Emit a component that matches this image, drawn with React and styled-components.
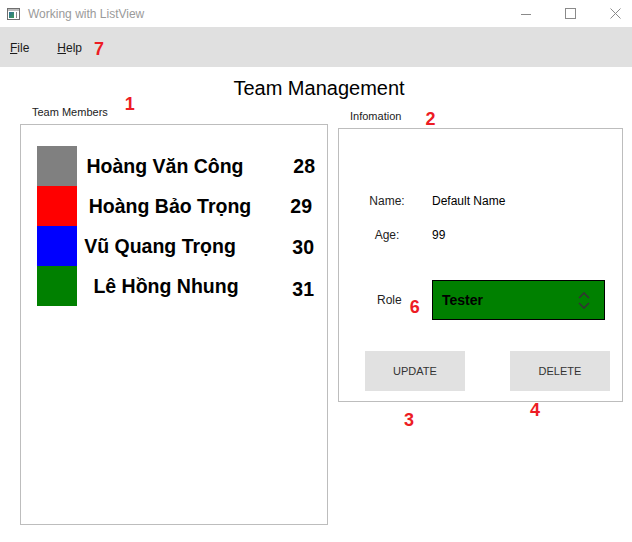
import React from "react";
import styled, { createGlobalStyle } from "styled-components";

const GlobalStyle = createGlobalStyle`
  html, body { margin: 0; padding: 0; background: #fff; }
  body { font-family: "Liberation Sans", Arial, sans-serif; color: #000; }
  * { box-sizing: border-box; }
`;

const members = [
  { name: "Hoàng Văn Công", age: 28, color: "#808080", nudge: 0, ageShift: 0, ageDrop: 0 },
  { name: "Hoàng Bảo Trọng", age: 29, color: "#ff0000", nudge: 5, ageShift: 3, ageDrop: 0 },
  { name: "Vũ Quang Trọng", age: 30, color: "#0000ff", nudge: -5, ageShift: 1, ageDrop: 1 },
  { name: "Lê Hồng Nhung", age: 31, color: "#008000", nudge: 1, ageShift: 1, ageDrop: 3 },
];

const Window = styled.div`
  width: 632px;
  height: 542px;
  display: flex;
  flex-direction: column;
  overflow: hidden;
  background: #fff;
`;

const TitleBar = styled.div`
  height: 27px;
  display: flex;
  align-items: center;
  padding-left: 7px;
  overflow: hidden;
`;

const TitleText = styled.span`
  margin-left: 8px;
  font-size: 12px;
  color: #9a9a9a;
`;

const Controls = styled.div`
  margin-left: auto;
  margin-right: -6px;
  display: flex;
`;

const ControlButton = styled.div`
  width: 45px;
  height: 27px;
  display: flex;
  align-items: center;
  justify-content: center;
`;

const MenuBar = styled.div`
  height: 40px;
  background: #e0e0e0;
  display: flex;
  align-items: center;
  padding: 2px 0 0 10px;
`;

const MenuItem = styled.span`
  font-size: 12px;
  line-height: 16px;
  color: #1a1a1a;
  margin-right: ${(p) => p.$gap || 0}px;
`;

const Accel = styled.span`
  text-decoration: underline;
`;

const Mark = styled.span`
  font-size: 18px;
  line-height: 18px;
  font-weight: bold;
  color: #ed1c24;
  margin-left: ${(p) => p.$dx || 0}px;
  margin-top: ${(p) => p.$dy || 0}px;
`;

const Main = styled.div`
  flex: 1;
  display: flex;
  flex-direction: column;
  padding-top: 9px;
`;

const Heading = styled.h1`
  margin: 0;
  padding-left: 6px;
  text-align: center;
  font-size: 20px;
  line-height: 24px;
  font-weight: normal;
  color: #000;
`;

const Columns = styled.div`
  display: flex;
  align-items: flex-start;
  gap: 10px;
  padding-left: 20px;
`;

const Column = styled.div`
  width: ${(p) => p.$w}px;
  display: flex;
  flex-direction: column;
`;

const CaptionRow = styled.div`
  height: ${(p) => p.$h}px;
  display: flex;
  align-items: flex-start;
  padding-left: 12px;
`;

const CaptionText = styled.span`
  font-size: 11px;
  line-height: 14px;
  color: #222;
  margin-top: ${(p) => p.$top}px;
`;

const Panel = styled.div`
  border: 1px solid #bdbdbd;
`;

const MembersPanel = styled(Panel)`
  height: 401px;
  padding: 21px 12px 0 16px;
`;

const MemberRow = styled.div`
  display: grid;
  grid-template-columns: 40px 176px 1fr;
  align-items: center;
  height: 40px;
`;

const Swatch = styled.div`
  width: 40px;
  height: 40px;
  background: ${(p) => p.$color};
`;

const MemberName = styled.div`
  text-align: center;
  font-size: 19.5px;
  line-height: 24px;
  font-weight: bold;
  white-space: nowrap;
  padding-left: ${(p) => Math.max(0, p.$nudge * 2)}px;
  padding-right: ${(p) => Math.max(0, -p.$nudge * 2)}px;
`;

const MemberAge = styled.div`
  text-align: right;
  font-size: 19.5px;
  line-height: 24px;
  font-weight: bold;
  padding-right: ${(p) => p.$shift}px;
  padding-top: ${(p) => p.$drop * 2}px;
`;

const InfoPanel = styled(Panel)`
  padding: 64px 11px 10px 3px;
`;

const FieldRow = styled.div`
  display: grid;
  grid-template-columns: 90px 1fr;
  align-items: center;
  margin-top: ${(p) => p.$gap || 0}px;
`;

const FieldLabel = styled.span`
  text-align: center;
  font-size: 12px;
  line-height: 16px;
  color: #222;
`;

const FieldValue = styled.span`
  font-size: 12px;
  line-height: 16px;
  color: #000;
`;

const RoleRow = styled.div`
  display: grid;
  grid-template-columns: 90px 1fr;
  height: 40px;
  margin-top: 37px;
`;

const RoleLabel = styled.div`
  display: flex;
  align-items: flex-start;
  padding-left: 35px;
`;

const RoleText = styled.span`
  font-size: 12px;
  line-height: 16px;
  color: #222;
  margin-top: 12px;
`;

const Combo = styled.div`
  width: 173px;
  height: 40px;
  background: #008000;
  border: 1px solid #000;
  display: flex;
  align-items: center;
  justify-content: space-between;
  padding: 0 14px 0 9px;
  font-size: 14px;
  font-weight: bold;
  color: #000;
`;

const ButtonRow = styled.div`
  display: flex;
  gap: 45px;
  padding-left: 23px;
  margin-top: 31px;
`;

const ActionButton = styled.button`
  flex: none;
  width: 100px;
  height: 40px;
  border: none;
  background: #e1e1e1;
  font-family: inherit;
  font-size: 11px;
  color: #333;
  padding: 0;
`;

const Notes = styled.div`
  display: flex;
  align-items: flex-start;
  gap: 116px;
  padding-left: 66px;
`;

function AppIcon() {
  return (
    <svg width="13" height="12" viewBox="0 0 13 12">
      <defs>
        <linearGradient id="ic" x1="0" y1="0" x2="1" y2="1">
          <stop offset="0" stopColor="#2f6f9a" />
          <stop offset="1" stopColor="#3b9a55" />
        </linearGradient>
      </defs>
      <rect x="0.5" y="0.5" width="12" height="11" fill="#fff" stroke="#6f6f6f" />
      <rect x="1" y="1" width="11" height="2" fill="#bdbdbd" />
      <rect x="2" y="4" width="5" height="6" fill="url(#ic)" />
      <rect x="9" y="4" width="1" height="6" fill="#8a8a8a" />
    </svg>
  );
}

function Chevrons() {
  return (
    <svg width="12" height="17" viewBox="0 0 12 17">
      <path d="M1 6 L6 1 L11 6" fill="none" stroke="#333" strokeWidth="1.6" />
      <path d="M1 11 L6 16 L11 11" fill="none" stroke="#333" strokeWidth="1.6" />
    </svg>
  );
}

export default function App() {
  return (
    <Window>
      <GlobalStyle />
      <TitleBar>
        <AppIcon />
        <TitleText>Working with ListView</TitleText>
        <Controls>
          <ControlButton>
            <svg width="10" height="10" viewBox="0 0 10 10">
              <path d="M0 5.5 H10" stroke="#8a8a8a" strokeWidth="1" />
            </svg>
          </ControlButton>
          <ControlButton>
            <svg width="11" height="11" viewBox="0 0 11 11">
              <rect x="0.5" y="0.5" width="10" height="10" fill="none" stroke="#8a8a8a" />
            </svg>
          </ControlButton>
          <ControlButton>
            <svg width="11" height="11" viewBox="0 0 11 11">
              <path d="M0.5 0.5 L10.5 10.5 M10.5 0.5 L0.5 10.5" stroke="#8a8a8a" strokeWidth="1" />
            </svg>
          </ControlButton>
        </Controls>
      </TitleBar>

      <MenuBar>
        <MenuItem $gap={28}>
          <Accel>F</Accel>ile
        </MenuItem>
        <MenuItem>
          <Accel>H</Accel>elp
        </MenuItem>
        <Mark $dx={12} $dy={2}>7</Mark>
      </MenuBar>

      <Main>
        <Heading>Team Management</Heading>
        <Columns>
          <Column $w={308}>
            <CaptionRow $h={24}>
              <CaptionText $top={5}>Team Members</CaptionText>
              <Mark $dx={17} $dy={-5}>1</Mark>
            </CaptionRow>
            <MembersPanel>
              {members.map((m) => (
                <MemberRow key={m.name}>
                  <Swatch $color={m.color} />
                  <MemberName $nudge={m.nudge}>{m.name}</MemberName>
                  <MemberAge $shift={m.ageShift} $drop={m.ageDrop}>{m.age}</MemberAge>
                </MemberRow>
              ))}
            </MembersPanel>
          </Column>

          <Column $w={285}>
            <CaptionRow $h={28}>
              <CaptionText $top={9}>Infomation</CaptionText>
              <Mark $dx={24} $dy={10}>2</Mark>
            </CaptionRow>
            <InfoPanel>
              <FieldRow>
                <FieldLabel>Name:</FieldLabel>
                <FieldValue>Default Name</FieldValue>
              </FieldRow>
              <FieldRow $gap={18}>
                <FieldLabel>Age:</FieldLabel>
                <FieldValue>99</FieldValue>
              </FieldRow>
              <RoleRow>
                <RoleLabel>
                  <RoleText>Role</RoleText>
                  <Mark $dx={8} $dy={18}>6</Mark>
                </RoleLabel>
                <Combo>
                  <span>Tester</span>
                  <Chevrons />
                </Combo>
              </RoleRow>
              <ButtonRow>
                <ActionButton>UPDATE</ActionButton>
                <ActionButton>DELETE</ActionButton>
              </ButtonRow>
            </InfoPanel>
            <Notes>
              <Mark $dy={9}>3</Mark>
              <Mark $dy={-1}>4</Mark>
            </Notes>
          </Column>
        </Columns>
      </Main>
    </Window>
  );
}
